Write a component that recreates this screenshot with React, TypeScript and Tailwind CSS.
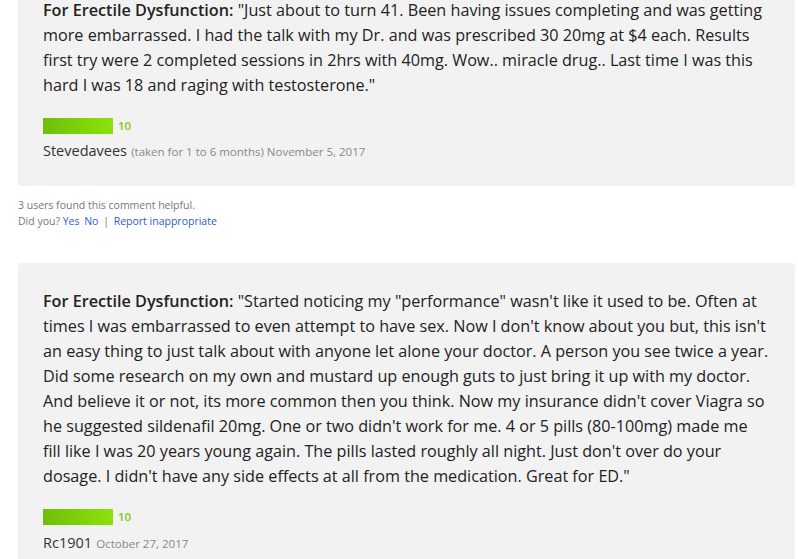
const reviews = [
  {
    lines: [
      '"Just about to turn 41. Been having issues completing and was getting',
      "more embarrassed. I had the talk with my Dr. and was prescribed 30 20mg at $4 each. Results",
      "first try were 2 completed sessions in 2hrs with 40mg. Wow.. miracle drug.. Last time I was this",
      'hard I was 18 and raging with testosterone."',
    ],
    user: "Stevedavees",
    taken: "(taken for 1 to 6 months)",
    date: "November 5, 2017",
  },
  {
    lines: [
      '"Started noticing my "performance" wasn\'t like it used to be. Often at',
      "times I was embarrassed to even attempt to have sex. Now I don't know about you but, this isn't",
      "an easy thing to just talk about with anyone let alone your doctor. A person you see twice a year.",
      "Did some research on my own and mustard up enough guts to just bring it up with my doctor.",
      "And believe it or not, its more common then you think. Now my insurance didn't cover Viagra so",
      "he suggested sildenafil 20mg. One or two didn't work for me. 4 or 5 pills (80-100mg) made me",
      "fill like I was 20 years young again. The pills lasted roughly all night. Just don't over do your",
      'dosage. I didn\'t have any side effects at all from the medication. Great for ED."',
    ],
    user: "Rc1901",
    taken: "",
    date: "October 27, 2017",
  },
];

function Review({ r, first }: { r: (typeof reviews)[number]; first?: boolean }) {
  return (
    <div className={(first ? "mt-[-28px] " : "") + "rounded bg-[#f2f2f2] pl-[25px] pr-3 pt-[26px] pb-[24px]"}>
      <p className="text-[16.2px] leading-[25px] text-[#222]">
        {r.lines.map((line, i) => (
          <span key={i} className="block whitespace-nowrap">
            {i === 0 && <b className="font-semibold text-[#222]">For Erectile Dysfunction: </b>}
            {line}
          </span>
        ))}
      </p>
      <div className="mt-[19px] flex items-center gap-[5px]">
        <div className="h-[16px] w-[70px] bg-gradient-to-r from-[#6fbe0a] to-[#8ee20a]" />
        <span className="text-[11.5px] font-semibold text-[#84c80f]">10</span>
      </div>
      <div className="mt-[6px] leading-[20px]">
        <span className="text-[14.5px] text-[#333]">{r.user}</span>{" "}
        {r.taken && <span className="text-[11.5px] text-[#888]">{r.taken} </span>}
        <span className="text-[11.5px] text-[#888]">{r.date}</span>
      </div>
    </div>
  );
}

export default function App() {
  return (
    <div
      className="min-h-[559px] overflow-hidden bg-white pl-[18px] pr-[3px]"
      style={{ fontFamily: '"Segoe UI", "Open Sans", "Noto Sans", sans-serif' }}
    >
      <Review r={reviews[0]} first />
      <div className="mt-[11px] text-[10.5px] leading-[16px] text-[#777]">
        <p>3 users found this comment helpful.</p>
        <p>
          Did you? <a className="text-[#2a5bd7]">Yes</a> <a className="ml-[2px] text-[#2a5bd7]">No</a>{" "}
          <span className="mx-[2px]">|</span> <a className="text-[#2a5bd7]">Report inappropriate</a>
        </p>
      </div>
      <div className="mt-[34px]">
        <Review r={reviews[1]} />
      </div>
    </div>
  );
}
